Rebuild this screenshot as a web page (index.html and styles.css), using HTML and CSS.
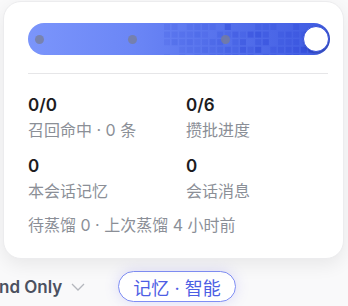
FILE: index.html
```html
<!DOCTYPE html>
<html lang="zh">
<head>
<meta charset="utf-8">
<link rel="stylesheet" href="styles.css">
</head>
<body class="page">
  <div class="popover">
    <div class="bar">
      <svg class="grid" viewBox="0 0 302 32" width="302" height="32" aria-hidden="true">
        <g fill="#2a44d6">
          <rect x="136" y="1" width="6" height="6" opacity=".12"/><rect x="143.6" y="1" width="6" height="6" opacity=".12"/><rect x="158.8" y="1" width="6" height="6" opacity=".12"/><rect x="166.4" y="1" width="6" height="6" opacity=".15"/><rect x="174" y="1" width="6" height="6" opacity=".15"/><rect x="181.6" y="1" width="6" height="6" opacity=".12"/><rect x="196.8" y="1" width="6" height="6" opacity=".45"/><rect x="227.2" y="1" width="6" height="6" opacity=".2"/><rect x="234.8" y="1" width="6" height="6" opacity=".2"/><rect x="242.4" y="1" width="6" height="6" opacity=".2"/><rect x="265.2" y="1" width="6" height="6" opacity=".3"/>
          <rect x="136" y="8.6" width="6" height="6" opacity=".15"/><rect x="143.6" y="8.6" width="6" height="6" opacity=".15"/><rect x="151.2" y="8.6" width="6" height="6" opacity=".15"/><rect x="158.8" y="8.6" width="6" height="6" opacity=".15"/><rect x="166.4" y="8.6" width="6" height="6" opacity=".2"/><rect x="174" y="8.6" width="6" height="6" opacity=".12"/><rect x="189.2" y="8.6" width="6" height="6" opacity=".2"/><rect x="196.8" y="8.6" width="6" height="6" opacity=".15"/><rect x="204.4" y="8.6" width="6" height="6" opacity=".3"/><rect x="212" y="8.6" width="6" height="6" opacity=".15"/><rect x="219.6" y="8.6" width="6" height="6" opacity=".4"/><rect x="227.2" y="8.6" width="6" height="6" opacity=".45"/><rect x="234.8" y="8.6" width="6" height="6" opacity=".3"/><rect x="250" y="8.6" width="6" height="6" opacity=".2"/><rect x="257.6" y="8.6" width="6" height="6" opacity=".3"/><rect x="265.2" y="8.6" width="6" height="6" opacity=".25"/><rect x="272.8" y="8.6" width="6" height="6" opacity=".2"/><rect x="280.4" y="8.6" width="6" height="6" opacity=".5"/>
          <rect x="136" y="16.2" width="6" height="6" opacity=".12"/><rect x="143.6" y="16.2" width="6" height="6" opacity=".2"/><rect x="151.2" y="16.2" width="6" height="6" opacity=".15"/><rect x="158.8" y="16.2" width="6" height="6" opacity=".2"/><rect x="166.4" y="16.2" width="6" height="6" opacity=".12"/><rect x="174" y="16.2" width="6" height="6" opacity=".15"/><rect x="181.6" y="16.2" width="6" height="6" opacity=".2"/><rect x="189.2" y="16.2" width="6" height="6" opacity=".25"/><rect x="204.4" y="16.2" width="6" height="6" opacity=".2"/><rect x="212" y="16.2" width="6" height="6" opacity=".35"/><rect x="227.2" y="16.2" width="6" height="6" opacity=".3"/><rect x="234.8" y="16.2" width="6" height="6" opacity=".4"/><rect x="250" y="16.2" width="6" height="6" opacity=".2"/><rect x="257.6" y="16.2" width="6" height="6" opacity=".25"/><rect x="265.2" y="16.2" width="6" height="6" opacity=".3"/>
          <rect x="151.2" y="23.8" width="6" height="6" opacity=".12"/><rect x="158.8" y="23.8" width="6" height="6" opacity=".15"/><rect x="166.4" y="23.8" width="6" height="6" opacity=".15"/><rect x="174" y="23.8" width="6" height="6" opacity=".2"/><rect x="181.6" y="23.8" width="6" height="6" opacity=".15"/><rect x="189.2" y="23.8" width="6" height="6" opacity=".2"/><rect x="196.8" y="23.8" width="6" height="6" opacity=".3"/><rect x="204.4" y="23.8" width="6" height="6" opacity=".2"/><rect x="212" y="23.8" width="6" height="6" opacity=".4"/><rect x="219.6" y="23.8" width="6" height="6" opacity=".25"/><rect x="227.2" y="23.8" width="6" height="6" opacity=".5"/><rect x="242.4" y="23.8" width="6" height="6" opacity=".25"/><rect x="250" y="23.8" width="6" height="6" opacity=".3"/><rect x="257.6" y="23.8" width="6" height="6" opacity=".35"/><rect x="265.2" y="23.8" width="6" height="6" opacity=".4"/><rect x="272.8" y="23.8" width="6" height="6" opacity=".55"/><rect x="280.4" y="23.8" width="6" height="6" opacity=".6"/>
          <rect x="136" y="31.4" width="6" height="6" opacity=".2"/><rect x="151.2" y="31.4" width="6" height="6" opacity=".2"/><rect x="166.4" y="31.4" width="6" height="6" opacity=".2"/><rect x="181.6" y="31.4" width="6" height="6" opacity=".3"/><rect x="189.2" y="31.4" width="6" height="6" opacity=".3"/><rect x="196.8" y="31.4" width="6" height="6" opacity=".35"/><rect x="204.4" y="31.4" width="6" height="6" opacity=".4"/><rect x="212" y="31.4" width="6" height="6" opacity=".3"/><rect x="219.6" y="31.4" width="6" height="6" opacity=".45"/><rect x="234.8" y="31.4" width="6" height="6" opacity=".4"/><rect x="242.4" y="31.4" width="6" height="6" opacity=".4"/><rect x="257.6" y="31.4" width="6" height="6" opacity=".45"/><rect x="265.2" y="31.4" width="6" height="6" opacity=".5"/>
        </g>
      </svg>
      <div class="dots">
        <span class="dot"></span>
        <span class="dot"></span>
        <span class="dot"></span>
      </div>
      <span class="knob"></span>
    </div>
    <hr class="divider">
    <div class="stats">
      <div class="stat">
        <div class="num">0/0</div>
        <div class="label">召回命中 · 0 条</div>
      </div>
      <div class="stat">
        <div class="num">0/6</div>
        <div class="label">攒批进度</div>
      </div>
      <div class="stat">
        <div class="num">0</div>
        <div class="label">本会话记忆</div>
      </div>
      <div class="stat">
        <div class="num">0</div>
        <div class="label">会话消息</div>
      </div>
    </div>
    <div class="footer">待蒸馏 0 · 上次蒸馏 4 小时前</div>
  </div>

  <div class="toolbar">
    <span class="mode">nd Only</span>
    <svg class="chev" viewBox="0 0 14 8" width="14" height="8" aria-hidden="true"><path d="M1 1l6 6 6-6" fill="none" stroke="#b4b7bd" stroke-width="1.3"/></svg>
    <span class="pill">记忆 · 智能</span>
  </div>
</body>
</html>
```
FILE: styles.css
```css
* { box-sizing: border-box; }
html, body { margin: 0; padding: 0; }
.page {
  width: 348px;
  height: 306px;
  overflow: hidden;
  background: #f9f9fa;
  font-family: Inter, "Noto Sans CJK SC", sans-serif;
  display: flex;
  flex-direction: column;
  justify-content: flex-end;
  position: relative;
}
.popover {
  position: absolute;
  left: 3px;
  top: 1px;
  width: 341px;
  height: 258px;
  background: #fff;
  border: 1px solid #ececee;
  border-radius: 18px;
  box-shadow: 0 6px 18px rgba(0,0,0,0.07);
  padding: 21px 13px 0 24px;
  z-index: 2;
}
.bar {
  position: relative;
  height: 32px;
  width: 302px;
  border-radius: 16px;
  background: linear-gradient(90deg, #7b95fb 0%, #6b86f6 35%, #5571ec 65%, #3f5be2 100%);
  overflow: hidden;
  display: flex;
  align-items: center;
}
.grid { position: absolute; left: 0; top: 0; }
.dots {
  position: relative;
  display: flex;
  gap: 84px;
  padding-left: 7px;
}
.dot {
  width: 9px;
  height: 9px;
  border-radius: 50%;
  background: rgba(120,125,150,0.75);
}
.knob {
  position: absolute;
  right: 1px;
  top: 3px;
  width: 26px;
  height: 26px;
  border-radius: 50%;
  background: #fff;
  border: 1.5px solid #3550de;
  box-shadow: 1px 1px 3px rgba(0,0,0,0.25);
}
.divider {
  border: 0;
  border-top: 1px solid #e6e6e8;
  margin: 18px 0 0 0;
  width: 300px;
}
.stats {
  display: grid;
  grid-template-columns: 158px 1fr;
  row-gap: 13px;
  margin-top: 20px;
}
.num {
  font-size: 17px;
  line-height: 22px;
  font-weight: 600;
  color: #1c1c1e;
}
.label {
  margin-top: 2px;
  font-size: 16px;
  line-height: 24px;
  color: #8b8f97;
}
.footer {
  margin-top: 10px;
  font-size: 16px;
  line-height: 24px;
  color: #8b8f97;
}
.toolbar {
  display: flex;
  align-items: center;
  height: 31px;
  margin-bottom: 4px;
}
.mode {
  font-size: 17px;
  font-weight: 600;
  color: #4b5160;
  margin-left: -1px;
}
.chev { margin-left: 9px; margin-top: 1px; }
.pill {
  margin-left: 33px;
  height: 31px;
  padding: 0 14px;
  display: flex;
  align-items: center;
  border: 1px solid #7f8ef4;
  border-radius: 16px;
  color: #4d5ee4;
  font-size: 18px;
  background: #fff;
  box-shadow: 0 0 14px rgba(120,110,240,0.22);
}
```
